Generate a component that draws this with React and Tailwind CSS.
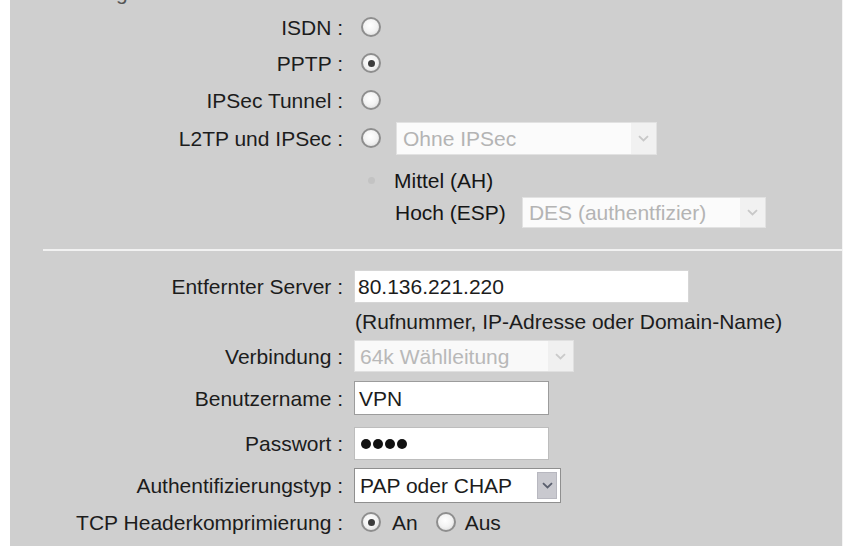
import React from "react";

function Radio({ checked, faint }) {
  if (faint) {
    return <span className="inline-block w-[7px] h-[7px] rounded-full bg-[#c3c3c3]" />;
  }
  return (
    <span className="inline-flex items-center justify-center w-[20px] h-[20px] rounded-full border-2 border-[#8e8e8e] bg-[radial-gradient(circle_at_45%_40%,#ffffff_0%,#f3f3f3_50%,#d6d6d6_100%)]">
      {checked && <span className="w-[7px] h-[7px] rounded-full bg-[#3c3c3c]" />}
    </span>
  );
}

function Chevron({ color }) {
  return (
    <svg width="11" height="7" viewBox="0 0 11 7" fill="none">
      <path d="M1 1.2 L5.5 5.5 L10 1.2" stroke={color} strokeWidth="1.8" />
    </svg>
  );
}

function Row({ label, className, children }) {
  return (
    <div className={"flex items-center " + className}>
      <div className="w-[333px] shrink-0 text-right whitespace-nowrap leading-none">{label}</div>
      <div className="ml-[11px] flex items-center">{children}</div>
    </div>
  );
}

export default function App() {
  return (
    <div className="flex w-[843px] h-[546px] overflow-hidden bg-white">
      <div className="w-[10px] shrink-0 bg-white" />
      <div className="flex-1 flex flex-col bg-[#cfcfcf] border-r border-[#f4f4f4] font-['Liberation_Sans',Arial,sans-serif] text-[21px] text-[#1c1c1c] overflow-hidden">
        <div className="h-[9px] overflow-hidden pl-[15px]">
          <div className="-mt-[18px] leading-[21px] text-[#555] whitespace-nowrap">Einstellungen für den Tunnel</div>
        </div>

        <Row label="ISDN :" className="h-[36px]">
          <span className="ml-[7px] flex"><Radio /></span>
        </Row>
        <Row label="PPTP :" className="h-[36px]">
          <span className="ml-[7px] flex"><Radio checked /></span>
        </Row>
        <Row label="IPSec Tunnel :" className="h-[38px]">
          <span className="ml-[7px] flex"><Radio /></span>
        </Row>
        <Row label="L2TP und IPSec :" className="h-[38px]">
          <span className="ml-[7px] flex"><Radio /></span>
          <div className="ml-[15px] w-[261px] h-[33px] flex items-center bg-[#fbfbfb] border border-[#e2e2e2]">
            <span className="flex-1 pl-[6px] text-[#b4b4b4] leading-none">Ohne IPSec</span>
            <span className="w-[25px] h-full flex items-center justify-center bg-[#f1f1f1]"><Chevron color="#c8c8c8" /></span>
          </div>
        </Row>
        <Row label="" className="mt-[6px] h-[34px]">
          <span className="ml-[14px] flex"><Radio faint /></span>
          <span className="ml-[19px] leading-none text-[#151515]">Mittel (AH)</span>
        </Row>
        <Row label="" className="h-[31px]">
          <span className="ml-[41px] leading-none text-[#151515]">Hoch (ESP)</span>
          <div className="ml-[16px] w-[244px] h-[31px] flex items-center bg-[#fbfbfb] border border-[#e2e2e2]">
            <span className="flex-1 pl-[6px] text-[#b4b4b4] leading-none whitespace-nowrap">DES (authentfizier)</span>
            <span className="w-[25px] h-full flex items-center justify-center bg-[#f1f1f1]"><Chevron color="#c8c8c8" /></span>
          </div>
        </Row>

        <div className="mt-[21px] ml-[33px] h-[2px] bg-[#f2f2f2]" />

        <Row label="Entfernter Server :" className="mt-[19px] h-[33px]">
          <div className="w-[335px] h-[33px] flex items-center bg-white border border-[#d6d6d6] pl-[3px] leading-none whitespace-nowrap">80.136.221.220</div>
        </Row>
        <Row label="" className="h-[37px]">
          <span className="ml-[1px] leading-none whitespace-nowrap">(Rufnummer, IP-Adresse oder Domain-Name)</span>
        </Row>
        <Row label="Verbindung :" className="h-[32px]">
          <div className="w-[220px] h-[32px] flex items-center bg-[#f9f9f9] border border-[#e0e0e0]">
            <span className="flex-1 pl-[5px] text-[#b8b8b8] leading-none whitespace-nowrap">64k Wählleitung</span>
            <span className="w-[25px] h-full flex items-center justify-center bg-[#f0f0f0]"><Chevron color="#cacaca" /></span>
          </div>
        </Row>
        <Row label="Benutzername :" className="mt-[9px] h-[34px]">
          <div className="w-[195px] h-[34px] flex items-center bg-white border border-[#9c9c9c] pl-[4px] leading-none">VPN</div>
        </Row>
        <Row label="Passwort :" className="mt-[12px] h-[33px]">
          <div className="w-[195px] h-[33px] flex items-center gap-[2px] bg-white border border-[#bdbdbd] pl-[6px]">
            <span className="w-[10px] h-[10px] rounded-full bg-[#111]" />
            <span className="w-[10px] h-[10px] rounded-full bg-[#111]" />
            <span className="w-[10px] h-[10px] rounded-full bg-[#111]" />
            <span className="w-[10px] h-[10px] rounded-full bg-[#111]" />
          </div>
        </Row>
        <Row label="Authentifizierungstyp :" className="mt-[8px] h-[35px]">
          <div className="w-[207px] h-[35px] flex items-center bg-white border border-[#8f8f8f]">
            <span className="flex-1 pl-[5px] leading-none whitespace-nowrap">PAP oder CHAP</span>
            <span className="w-[20px] h-[27px] mr-[3px] flex items-center justify-center bg-[#c9c9cf] border border-[#b8b8c0]"><Chevron color="#5a5f6e" /></span>
          </div>
        </Row>
        <Row label="TCP Headerkomprimierung :" className="h-[38px]">
          <span className="ml-[7px] flex"><Radio checked /></span>
          <span className="ml-[11px] leading-none">An</span>
          <span className="ml-[18px] flex"><Radio /></span>
          <span className="ml-[9px] leading-none">Aus</span>
        </Row>
      </div>
    </div>
  );
}
